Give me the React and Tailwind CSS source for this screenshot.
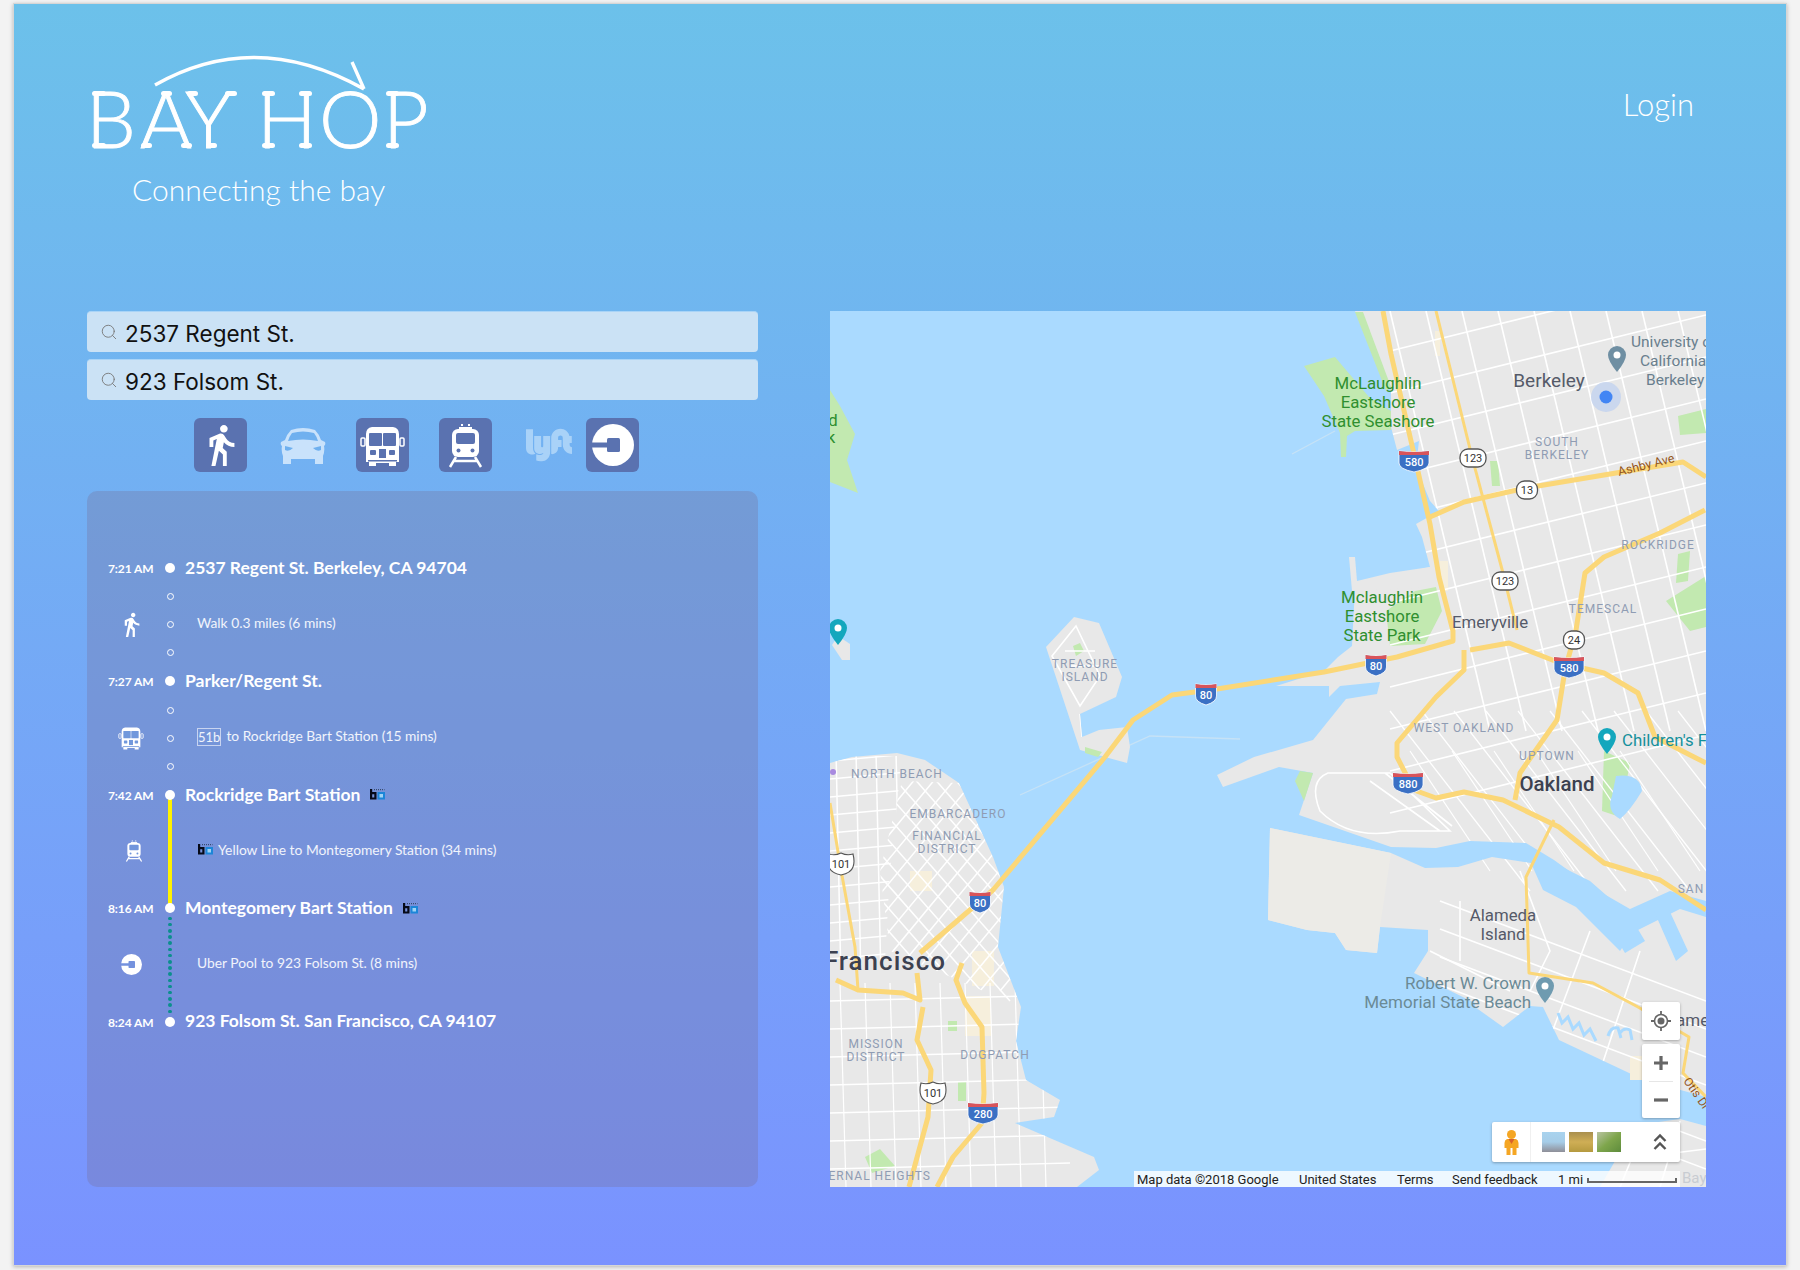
import React from 'react';
import { Search } from 'lucide-react';
import { MdDirectionsWalk } from 'react-icons/md';
import { FaLyft } from 'react-icons/fa';

// ---------- transport icons ----------
const BusIcon = ({ size = 53, fg = '#fff', bg = '#5a72b0' }) => (
  <svg width={size} height={size} viewBox="0 0 53 53">
    <path d="M16 8 H37 Q43 9 43 15 V43 H40 V47 H33 V44 H20 V47 H13 V43 H10 V15 Q10 9 16 8Z" fill={fg} />
    <rect x="5" y="19" width="4" height="8" rx="1" fill="none" stroke={fg} strokeWidth="1.5" />
    <rect x="44" y="19" width="4" height="8" rx="1" fill="none" stroke={fg} strokeWidth="1.5" />
    <rect x="13" y="14" width="13" height="13" rx="1" fill={bg} />
    <rect x="27" y="14" width="13" height="13" rx="1" fill={bg} />
    <rect x="14" y="31" width="6" height="5" rx="1" fill={bg} />
    <rect x="33" y="31" width="6" height="5" rx="1" fill={bg} />
    <rect x="23" y="30" width="7" height="9" fill={bg} />
    <rect x="12" y="41" width="29" height="1.5" fill={bg} />
  </svg>
);

const TrainIcon = ({ size = 53, fg = '#fff', bg = '#5a72b0' }) => (
  <svg width={size} height={size} viewBox="0 0 53 53">
    <rect x="22" y="5" width="2" height="2" fill={fg} />
    <rect x="29" y="5" width="2" height="2" fill={fg} />
    <rect x="20" y="8" width="13" height="2" fill={fg} />
    <rect x="13" y="10" width="27" height="28" rx="6" fill={fg} />
    <rect x="17" y="14" width="19" height="11" rx="2" fill={bg} />
    <circle cx="19.5" cy="31.5" r="2" fill={bg} />
    <circle cx="33.5" cy="31.5" r="2" fill={bg} />
    <path d="M17 38 L11 48 M36 38 L42 48 M15 42 H38" stroke={fg} strokeWidth="2.5" fill="none" />
  </svg>
);

const CarIcon = () => (
  <svg width="46" height="37" viewBox="0 0 46 37">
    <path
      d="M11 3 Q23 -1 35 3 Q39 7 41 13 L45 15 Q46 18 44 19 Q45 24 43 29 V37 H35 V32 H11 V37 H3 V29 Q1 24 2 19 Q0 18 1 15 L5 13 Q7 7 11 3Z"
      fill="#c9e2fb"
    />
    <path d="M12 6 Q23 3 34 6 Q37 10 38 14 Q23 11 8 14 Q9 10 12 6Z" fill="#6fb0ef" />
    <path d="M5 19 L13 21 Q9 25 5 23Z M41 19 L33 21 Q37 25 41 23Z" fill="#6fb0ef" />
  </svg>
);

const UberIcon = ({ size = 42, fg = '#fff', bg = '#5a72b0' }) => (
  <svg width={size} height={size} viewBox="0 0 42 42">
    <circle cx="21" cy="21" r="21" fill={fg} />
    <rect x="0" y="18.5" width="20" height="5" fill={bg} />
    <rect x="15" y="14" width="13" height="14" rx="1.5" fill={bg} />
  </svg>
);

const BartIcon = () => (
  <svg width="16" height="11" viewBox="0 0 16 11" className="shrink-0">
    <path d="M1 0 H3.2 V3 H7.5 V10.5 H1Z M3.2 5.2 V8.4 H5.3 V5.2Z" fill="#060a18" fillRule="evenodd" />
    <rect x="8.5" y="3" width="7.5" height="7.5" fill="#1c86d8" />
    <rect x="10.5" y="5" width="3.5" height="3.5" fill="#9fd3f5" />
    <path d="M5 0.7 H15.5" stroke="#2a3a55" strokeWidth="1" strokeDasharray="1 1" />
  </svg>
);

const Tile = ({ children }) => (
  <div className="w-[53px] h-[54px] rounded-[6px] bg-[#5a72b0] flex items-center justify-center shrink-0">{children}</div>
);

// ---------- logo ----------
const serifBars = [
  [7, 51, 14], [7, 103, 14],
  [56, 103, 11], [96, 103, 11], [76, 51, 11],
  [102, 51, 11], [140, 51, 12], [121, 103, 11],
  [177, 51, 13], [214, 51, 13], [177, 103, 13], [214, 103, 13],
  [301, 51, 13], [301, 103, 13],
];

const logoLetters = [
  ['B', 1], ['A', 55], ['Y', 100], ['H', 172], ['O', 234], ['P', 298],
];

const Logo = () => (
  <svg width="350" height="125" viewBox="0 0 350 125" className="overflow-visible">
    <path d="M70 45 Q170 -12 279 49 M267 22 L279 49" fill="none" stroke="#fff" strokeWidth="3.4" />
    {logoLetters.map(([ch, x]) => (
      <text key={ch} x={x} y="108" fill="#fff" stroke="#fff" strokeWidth="0.9" fontSize="79" fontWeight="300" className="font-['Lato',sans-serif]">{ch}</text>
    ))}
    {serifBars.map(([x, y, w], i) => (
      <rect key={i} x={x} y={y} width={w} height="5" rx="2.5" fill="#fff" />
    ))}
  </svg>
);

// ---------- map pieces ----------
const range = (a, b, s) => {
  const out = [];
  for (let v = a; v <= b; v += s) out.push(v);
  return out;
};

const land = {
  east: '525,0 547,43 561,76 561,116 567,139 589,130 586,156 600,190 609,200 586,213 592,226 600,256 556,266 525,276 522,335 508,346 494,360 446,375 499,375 499,386 510,375 550,371 547,383 516,388 483,429 424,446 387,464 393,476 449,456 483,462 469,504 561,536 606,537 640,530 696,532 724,549 760,575 800,598 840,580 876,590 876,0',
  alameda: '440,517 561,542 595,557 628,556 662,546 701,552 713,579 746,596 790,640 802,622 850,598 876,606 876,786 814,769 729,729 713,696 700,695 673,716 645,696 645,692 584,662 598,640 598,619 550,616 547,642 516,639 505,622 477,619 438,609',
  sf: '0,452 22,446 67,442 95,449 129,472 163,546 174,576 168,636 191,696 186,730 196,769 230,789 224,806 185,812 264,846 269,859 247,876 0,876',
  treasure: '216,336 244,306 269,312 292,366 286,386 250,403 252,426 269,419 297,416 300,436 297,452 275,446 250,439',
  south: '770,876 785,850 800,815 850,808 876,815 876,876',
};

const parks = [
  '474,55 505,46 539,86 561,100 561,119 525,120 517,125 516,146 511,146 510,122 494,85',
  '525,1 533,1 561,76 556,80',
  '606,276 612,300 595,333 560,335 556,300 585,280',
  '0,79 10,95 25,123 17,149 28,182 0,171',
  '774,440 800,452 790,506 772,500',
  '470,460 483,462 474,490 465,470',
  '848,243 860,240 858,270 846,272',
  '836,290 876,265 876,316 860,320',
  '848,105 876,98 876,122 850,124',
  '660,150 668,150 670,175 662,175',
  '243,335 250,332 254,340 246,345',
  '255,436 272,441 268,446 255,442',
  '35,846 50,838 65,855 42,862',
  '118,710 127,710 127,720 118,720',
  '128,770 136,770 136,790 128,790',
];

const highways = [
  '553,0 561,43 584,143 600,213 609,266 623,320 623,330 567,346 494,361 387,378 342,384 303,409 275,446 163,579 90,642',
  '640,339 679,332 730,352 774,362 808,382 825,426 864,446 876,452',
  '600,206 634,191 696,177 786,162 853,151 876,166',
  '875,199 830,222 774,246 755,262 746,319 735,359 727,409 701,446 690,462 685,489',
  '634,339 634,359 606,386 567,432 567,446 584,479 606,487 634,481 673,489 729,516 774,552 830,569 876,599',
  '6,669 28,679 73,682 90,689 87,662',
  '93,696 87,729 101,759 98,806 79,876',
  '132,652 126,669 135,692 152,716 154,782 152,812 123,846 107,876',
];

const minorHighways = [
  '606,0 642,146 673,262 687,319',
  '724,509 696,566 699,662 763,672 808,696 859,726 853,762 876,786',
  '0,492 11,559 25,636 28,679',
];

const Interstate = ({ x, y, n }) => {
  const w = n.length > 2 ? 30 : 21;
  return (
    <g transform={`translate(${x} ${y})`}>
      <path d={`M${-w / 2} -10 Q0 -8 ${w / 2} -10 V2 Q${w / 2} 8 0 11 Q${-w / 2} 8 ${-w / 2} 2Z`} fill="#3b70c4" stroke="#fff" strokeWidth="0.8" />
      <path d={`M${-w / 2} -10 Q0 -8 ${w / 2} -10 V-6 H${-w / 2}Z`} fill="#d9545a" />
      <text textAnchor="middle" y="5" fontSize="11" fontWeight="500" fill="#fff">{n}</text>
    </g>
  );
};

const StateRoute = ({ x, y, n }) => {
  const w = n.length > 2 ? 26 : 21;
  return (
    <g transform={`translate(${x} ${y})`}>
      <rect x={-w / 2} y="-9" width={w} height="18" rx="8" fill="#fff" stroke="#555" strokeWidth="1.3" />
      <text textAnchor="middle" y="4" fontSize="11" fill="#333">{n}</text>
    </g>
  );
};

const UsRoute = ({ x, y, n }) => (
  <g transform={`translate(${x} ${y})`}>
    <path d="M-12 -10 Q-6 -8 0 -11 Q6 -8 12 -10 Q14 -2 12 3 Q10 9 0 11 Q-10 9 -12 3 Q-14 -2 -12 -10Z" fill="#fff" stroke="#555" strokeWidth="1.1" />
    <text textAnchor="middle" y="4" fontSize="11" fill="#333">{n}</text>
  </g>
);

const Label = ({ x, y, s = 12, c = '#8f9cb3', a = 'middle', ls = 1, w = 400, r, children }) => (
  <text
    x={x}
    y={y}
    fontSize={s}
    fill={c}
    textAnchor={a}
    letterSpacing={ls}
    fontWeight={w}
    transform={r ? `rotate(${r} ${x} ${y})` : undefined}
  >
    {children}
  </text>
);

const Pin = ({ x, y, c }) => (
  <g transform={`translate(${x} ${y})`}>
    <path d="M0 13 Q-9 2 -9 -4 A9 9 0 1 1 9 -4 Q9 2 0 13Z" fill={c} />
    <circle cy="-4" r="3.5" fill="#fff" />
  </g>
);

const MapDrawing = () => (
  <svg width="876" height="876" viewBox="0 0 876 876" className="block font-['Roboto',sans-serif]">
    <defs>
      <clipPath id="landClip">
        {Object.values(land).map((p) => <polygon key={p} points={p} />)}
      </clipPath>
      <clipPath id="finClip">
        <polygon points="72,470 129,472 163,546 174,576 168,636 191,696 60,640 50,560" />
      </clipPath>
      <clipPath id="richmondClip">
        <polygon points="0,445 72,445 60,560 55,650 0,660" />
      </clipPath>
    </defs>
    <rect width="876" height="876" fill="#aadaff" />

    {/* ferry lines and faint piers */}
    <path d="M462 143 L505 120 M190 484 L320 425 L410 428" stroke="#c6e2f6" strokeWidth="1.3" fill="none" />

    {Object.values(land).map((p) => <polygon key={p} points={p} fill="#e8e8e8" />)}
    <polygon points="440,517 561,542 550,616 547,642 516,639 505,622 477,619 438,609" fill="#ecebe7" />
    <polygon points="20,333 8,325 2,334 12,349 20,349" fill="#e8e8e8" />
    <polygon points="519,246 525,246 527,270 560,262 600,256 606,276 522,280" fill="#e8e8e8" />
    {parks.map((p) => <polygon key={p} points={p} fill="#c2e9b0" />)}

    {/* tan blocks */}
    <path d="M605 20 h5 v25 h-5z M610 250 h8 v30 h-8z M80 560 h22 v20 h-22z M142 640 h22 v35 h-22z M800 745 h14 v24 h-14z M135 685 h26 v40 h-26z" fill="#f6efdc" />

    <g clipPath="url(#landClip)" stroke="#fff" fill="none">
      {/* east bay grid */}
      {range(560, 900, 36).map((x) => (
        <line key={x} x1={x} y1="0" x2={x + 100} y2="420" strokeWidth="1.6" />
      ))}
      {range(40, 520, 42).map((y) => (
        <line key={y} x1="560" y1={y} x2="876" y2={y - 78} strokeWidth="1.6" />
      ))}
      {/* oakland diagonal blocks */}
      {range(560, 900, 32).map((x) => (
        <line key={x} x1={x} y1="400" x2={x + 140} y2="580" strokeWidth="1.3" />
      ))}
      {range(660, 900, 42).map((x) => (
        <line key={x} x1={x} y1="560" x2={x - 80} y2="440" strokeWidth="1.2" />
      ))}
      {/* port loops */}
      <path d="M490 500 Q478 470 498 462 H560 L620 520 L570 520 Q520 530 490 500Z M540 470 L610 520 M555 462 L622 515" strokeWidth="1.6" />
      {/* alameda */}
      {range(610, 780, 28).map((y) => (
        <line key={y} x1="610" y1={y - 20} x2="876" y2={y + 80} strokeWidth="1.6" />
      ))}
      <path d="M630 590 V650 M690 560 L720 640 L700 680 M600 640 L680 680 M760 620 L700 780 M810 640 L760 790" strokeWidth="1.6" />
      {/* bottom right streets */}
      <path d="M790 876 L815 815 M830 876 L850 810 M780 850 L876 838" strokeWidth="1.6" />
      {/* san francisco */}
      <g clipPath="url(#finClip)">
        {range(-160, 240, 20).map((x) => (
          <line key={x} x1={x} y1="440" x2={x + 220} y2="690" strokeWidth="1.5" />
        ))}
        {range(40, 460, 20).map((x) => (
          <line key={x} x1={x} y1="450" x2={x - 190} y2="680" strokeWidth="1.5" />
        ))}
      </g>
      <g clipPath="url(#richmondClip)">
        {range(450, 660, 18).map((y) => (
          <line key={y} x1="0" y1={y} x2="90" y2={y - 8} strokeWidth="1.5" />
        ))}
        {range(6, 80, 20).map((x) => (
          <line key={x} x1={x} y1="440" x2={x + 5} y2="670" strokeWidth="1.5" />
        ))}
      </g>
      {range(690, 876, 28).map((y) => (
        <line key={y} x1="0" y1={y} x2="240" y2={y - 6} strokeWidth="1.4" />
      ))}
      {range(10, 230, 25).map((x) => (
        <line key={x} x1={x} y1="672" x2={x + 6} y2="876" strokeWidth="1.2" />
      ))}
      {/* treasure island */}
      <path d="M222 345 L246 315 L270 365 L250 395 Z M235 340 L265 340 M240 355 L270 355 M250 403 L252 426" strokeWidth="1.6" />
    </g>

    {/* inner water */}
    <path d="M786 465 Q810 462 812 480 Q800 500 790 508 Q776 500 782 485Z" fill="#aadaff" />
    <path d="M724 552 L770 600 L795 642 L815 630 L800 605 L760 570Z M835 590 L858 640 L846 650 L824 600Z" fill="#aadaff" />
    <path d="M728 702 l4 10 l6 -6 l5 12 l6 -6 l5 12 l6 -6 l6 12" fill="none" stroke="#aadaff" strokeWidth="3" />
    <path d="M778 725 q3 -10 10 -8 l3 10 M790 722 q4 -6 10 -3 l2 10" fill="none" stroke="#aadaff" strokeWidth="3" />

    {/* highways */}
    {highways.map((p) => (
      <polyline key={p} points={p} fill="none" stroke="#fbd778" strokeWidth="5" strokeLinejoin="round" />
    ))}
    {minorHighways.map((p) => (
      <polyline key={p} points={p} fill="none" stroke="#fbd778" strokeWidth="3" strokeLinejoin="round" />
    ))}

    {/* shields */}
    <Interstate x={584} y={150} n="580" />
    <Interstate x={546} y={354} n="80" />
    <Interstate x={739} y={356} n="580" />
    <Interstate x={376} y={383} n="80" />
    <Interstate x={578} y={472} n="880" />
    <Interstate x={150} y={591} n="80" />
    <Interstate x={153} y={802} n="280" />
    <StateRoute x={643} y={147} n="123" />
    <StateRoute x={697} y={179} n="13" />
    <StateRoute x={675} y={270} n="123" />
    <StateRoute x={744} y={329} n="24" />
    <UsRoute x={11} y={553} n="101" />
    <UsRoute x={103} y={782} n="101" />

    {/* place names */}
    <Label x={719} y={76} s={19} c="#555a68" ls={0}>Berkeley</Label>
    <Label x={801} y={36} s={15.5} c="#6a7f8e" a="start" ls={0}>University of</Label>
    <Label x={810} y={55} s={15.5} c="#6a7f8e" a="start" ls={0}>California,</Label>
    <Label x={816} y={74} s={15.5} c="#6a7f8e" a="start" ls={0}>Berkeley</Label>
    <Label x={548} y={78} s={16.8} c="#2f8f2f" ls={0}>McLaughlin</Label>
    <Label x={548} y={97} s={16.8} c="#2f8f2f" ls={0}>Eastshore</Label>
    <Label x={548} y={116} s={16.8} c="#2f8f2f" ls={0}>State Seashore</Label>
    <Label x={727} y={135}>SOUTH</Label>
    <Label x={727} y={148}>BERKELEY</Label>
    <Label x={789} y={165} s={12.5} c="#94561c" a="start" ls={0} r={-14}>Ashby Ave</Label>
    <Label x={828} y={238}>ROCKRIDGE</Label>
    <Label x={773} y={302}>TEMESCAL</Label>
    <Label x={552} y={292} s={16.8} c="#2f8f2f" ls={0}>Mclaughlin</Label>
    <Label x={552} y={311} s={16.8} c="#2f8f2f" ls={0}>Eastshore</Label>
    <Label x={552} y={330} s={16.8} c="#2f8f2f" ls={0}>State Park</Label>
    <Label x={660} y={317} s={16.8} c="#555a68" ls={0}>Emeryville</Label>
    <Label x={255} y={357}>TREASURE</Label>
    <Label x={255} y={370}>ISLAND</Label>
    <Label x={634} y={421}>WEST OAKLAND</Label>
    <Label x={717} y={449}>UPTOWN</Label>
    <Label x={792} y={435} s={16.8} c="#14909c" a="start" ls={0}>Children's Fairyland</Label>
    <Label x={727} y={480} s={20.5} c="#3c4150" w={500} ls={0}>Oakland</Label>
    <Label x={67} y={467}>NORTH BEACH</Label>
    <Label x={128} y={507}>EMBARCADERO</Label>
    <Label x={117} y={529}>FINANCIAL</Label>
    <Label x={117} y={542}>DISTRICT</Label>
    <Label x={116} y={659} s={26} c="#3c4150" a="end" w={500}>San Francisco</Label>
    <Label x={673} y={610} s={16.8} c="#555a68" ls={0}>Alameda</Label>
    <Label x={673} y={629} s={16.8} c="#555a68" ls={0}>Island</Label>
    <Label x={701} y={678} s={17} c="#6b8a96" a="end" ls={0}>Robert W. Crown</Label>
    <Label x={701} y={697} s={17} c="#6b8a96" a="end" ls={0}>Memorial State Beach</Label>
    <Label x={46} y={737}>MISSION</Label>
    <Label x={46} y={750}>DISTRICT</Label>
    <Label x={165} y={748}>DOGPATCH</Label>
    <Label x={101} y={869} a="end">BERNAL HEIGHTS</Label>
    <Label x={861} y={582}>SAN</Label>
    <Label x={846} y={715} s={17} c="#555a68" a="start" ls={0}>ameda</Label>
    <Label x={853} y={770} s={12} c="#94561c" a="start" ls={0} r={55}>Otis Dr</Label>
    <Label x={852} y={872} s={15} c="#c8ccd2" a="start" ls={0}>Bay</Label>
    <Label x={3} y={115} s={16.8} c="#2f8f2f" ls={0}>d</Label>
    <Label x={1} y={132} s={16.8} c="#2f8f2f" ls={0}>k</Label>

    <circle cx="3" cy="461" r="3" fill="#a98be0" />
    <Pin x={787} y={48} c="#6f8fa3" />
    <Pin x={8} y={321} c="#14a7bd" />
    <Pin x={777} y={430} c="#14a7bd" />
    <Pin x={715} y={679} c="#6f9bb0" />
    <circle cx="776" cy="86" r="15" fill="#c4d3ee" opacity="0.85" />
    <circle cx="776" cy="86" r="6.5" fill="#4285f4" />
  </svg>
);

const MapControls = () => (
  <>
    {/* locate */}
    <div className="absolute left-[812px] top-[691px] w-[38px] h-[38px] rounded-[2px] bg-white shadow-[0_1px_3px_rgba(0,0,0,0.3)] flex items-center justify-center">
      <svg width="22" height="22" viewBox="0 0 22 22">
        <circle cx="11" cy="11" r="6.5" fill="none" stroke="#666" strokeWidth="1.6" />
        <circle cx="11" cy="11" r="3.5" fill="#666" />
        <path d="M11 1 V4.5 M11 17.5 V21 M1 11 H4.5 M17.5 11 H21" stroke="#666" strokeWidth="1.8" />
      </svg>
    </div>
    {/* zoom */}
    <div className="absolute left-[812px] top-[733px] w-[38px] h-[74px] rounded-[2px] bg-white shadow-[0_1px_3px_rgba(0,0,0,0.3)] flex flex-col items-center">
      <div className="h-[37px] w-full flex items-center justify-center">
        <svg width="14" height="14" viewBox="0 0 14 14"><path d="M7 0 V14 M0 7 H14" stroke="#666" strokeWidth="3.2" /></svg>
      </div>
      <div className="w-[24px] h-px bg-[#e6e6e6]" />
      <div className="h-[36px] w-full flex items-center justify-center">
        <svg width="14" height="14" viewBox="0 0 14 14"><path d="M0 7 H14" stroke="#666" strokeWidth="3.2" /></svg>
      </div>
    </div>
    {/* street view and thumbnails */}
    <div className="absolute left-[662px] top-[811px] w-[188px] h-[40px] rounded-[2px] bg-white shadow-[0_1px_3px_rgba(0,0,0,0.3)] flex items-center">
      <div className="w-[39px] h-full flex items-center justify-center border-r border-[#f0f0f0]">
        <svg width="15" height="25" viewBox="0 0 15 25">
          <circle cx="7.5" cy="4.5" r="4.5" fill="#f5a623" />
          <path d="M3 9 H12 Q14.5 10 14.5 13 V18 H12.5 V25 H8.5 V18 H6.5 V25 H2.5 V18 H0.5 V13 Q0.5 10 3 9Z" fill="#f5a623" />
          <path d="M4.5 9 L7.5 14 L10.5 9Z" fill="#d9622b" />
        </svg>
      </div>
      <div className="flex gap-[4px] ml-[11px]">
        <div className="w-[23px] h-[20px] bg-linear-to-b from-[#a9d3ee] via-[#a6cde8] to-[#8f8f98]" />
        <div className="w-[24px] h-[20px] bg-linear-to-b from-[#a98f4e] via-[#cfae55] to-[#b59a3f]" />
        <div className="w-[24px] h-[20px] bg-linear-to-br from-[#b9c3a0] via-[#7fa64c] to-[#5e8c3c]" />
      </div>
      <svg width="14" height="18" viewBox="0 0 14 18" className="ml-[32px]">
        <path d="M1.5 8 L7 2.5 L12.5 8 M1.5 16 L7 10.5 L12.5 16" fill="none" stroke="#555" strokeWidth="2.4" />
      </svg>
    </div>
    {/* attribution */}
    <div className="absolute left-[304px] top-[860px] w-[546px] h-[16px] bg-white/80 flex items-center text-[13px] leading-none text-[#222] font-['Roboto',sans-serif]">
      <span className="ml-[3px]">Map data ©2018 Google</span>
      <span className="absolute left-[165px]">United States</span>
      <span className="absolute left-[263px]">Terms</span>
      <span className="absolute left-[318px]">Send feedback</span>
      <span className="absolute left-[424px]">1 mi</span>
      <div className="absolute left-[453px] top-[7px] w-[90px] h-[5px] border-x-2 border-b-2 border-[#666]" />
    </div>
  </>
);

// ---------- timeline ----------
const TitleDot = () => <div className="relative z-10 w-[10px] h-[10px] rounded-full bg-white" />;
const HollowDots = () => (
  <div className="flex flex-col gap-[21px]">
    {[0, 1, 2].map((i) => (
      <div key={i} className="w-[7px] h-[7px] rounded-full border-[1.5px] border-white" />
    ))}
  </div>
);

const Stop = ({ time, title, bart }) => (
  <div className="flex items-center h-[28px] text-white">
    <div className="w-[52px] pt-[2px] text-[12px] font-bold tracking-[-0.1px]">{time}</div>
    <div className="w-[20px] flex justify-center"><TitleDot /></div>
    <div className="ml-[5px] text-[17.5px] font-bold">{title}</div>
    {bart && <div className="ml-[9px]"><BartIcon /></div>}
  </div>
);

const Segment = ({ icon, line, children }) => (
  <div className="flex items-center h-[85.4px] text-white/90 text-[13.8px]">
    <div className="w-[46px] flex justify-center">{icon}</div>
    <div className="w-[6px]" />
    <div className="w-[20px] h-full flex flex-col justify-center items-center">{line}</div>
    <div className="ml-[17px] pb-[3px] flex items-center gap-[5px]">{children}</div>
  </div>
);

const AddressInput = ({ value }) => (
  <div className="h-[41px] rounded-[4px] bg-[#cbe2f5] border-t border-[#a9d4f7] flex items-center pl-[13px]">
    <Search size={18} strokeWidth={1.2} className="text-[#777] shrink-0" />
    <input
      readOnly
      defaultValue={value}
      className="ml-[7px] pt-[4px] flex-1 bg-transparent outline-none text-[22.5px] text-[#111] font-['Inter',sans-serif]"
    />
  </div>
);

const App = () => {
  return (
    <div className="h-[1270px] bg-[#f3f3f3] px-[13px] pt-[3px] pb-[4px]">
      <div className="h-full border border-[#d6d6d6] shadow-[0_1px_4px_rgba(0,0,0,0.25)] bg-linear-to-b from-[#6cc1ea] to-[#7a92ff] font-['Lato',sans-serif]">
        {/* header */}
        <div className="h-[307px] flex justify-between">
          <div className="ml-[71px] pt-[36px]">
            <Logo />
            <p className="ml-[47px] mt-[7px] text-[30px] leading-[34px] font-light text-white">Connecting the bay</p>
          </div>
          <div className="pt-[83px] pr-[92px] text-[31px] leading-[34px] font-light text-white">Login</div>
        </div>

        {/* main */}
        <div className="flex pl-[73px] gap-[72px]">
          <div className="w-[671px] flex flex-col">
            <div className="flex flex-col gap-[7px]">
              <AddressInput value="2537 Regent St." />
              <AddressInput value="923 Folsom St." />
            </div>

            <div className="flex items-center h-[54px] mt-[18px] ml-[107px]">
              <Tile><MdDirectionsWalk size={46} color="#fff" /></Tile>
              <div className="ml-[33px]"><CarIcon /></div>
              <div className="ml-[30px]"><Tile><BusIcon /></Tile></div>
              <div className="ml-[30px]"><Tile><TrainIcon /></Tile></div>
              <div className="ml-[34px] w-[46px] flex justify-center"><FaLyft size={46} color="#a9d2f8" /></div>
              <div className="ml-[14px]"><Tile><UberIcon /></Tile></div>
            </div>

            <div className="mt-[19px] h-[696px] rounded-[10px] bg-[#786e96]/30 pl-[21px] pt-[63px]">
              <Stop time="7:21 AM" title="2537 Regent St. Berkeley, CA 94704" />
              <Segment icon={<MdDirectionsWalk size={27} color="#fff" />} line={<HollowDots />}>
                <span>Walk 0.3 miles (6 mins)</span>
              </Segment>
              <Stop time="7:27 AM" title="Parker/Regent St." />
              <Segment icon={<BusIcon size={30} fg="#fff" bg="#7198dc" />} line={<HollowDots />}>
                <span className="text-[13px] border border-white/60 leading-[16px]">51b</span>
                <span>to Rockridge Bart Station (15 mins)</span>
              </Segment>
              <Stop time="7:42 AM" title="Rockridge Bart Station" bart />
              <Segment
                icon={<div className="ml-[6px]"><TrainIcon size={26} fg="#fff" bg="#7195dc" /></div>}
                line={<div className="w-[4px] h-[113px] shrink-0 bg-[#fff200]" />}
              >
                <BartIcon />
                <span>Yellow Line to Montegomery Station (34 mins)</span>
              </Segment>
              <Stop time="8:16 AM" title="Montegomery Bart Station" bart />
              <Segment
                icon={<UberIcon size={21} fg="#fff" bg="#7592de" />}
                line={
                  <div className="flex flex-col gap-[2.7px]">
                    {range(0, 15, 1).map((i) => (
                      <div key={i} className="w-[3.5px] h-[3.5px] rounded-full bg-[#0b8f8c]" />
                    ))}
                  </div>
                }
              >
                <span>Uber Pool to 923 Folsom St. (8 mins)</span>
              </Segment>
              <Stop time="8:24 AM" title="923 Folsom St. San Francisco, CA 94107" />
            </div>
          </div>

          <div className="relative w-[876px] h-[876px] overflow-hidden">
            <MapDrawing />
            <MapControls />
          </div>
        </div>
      </div>
    </div>
  );
};

export default App;
